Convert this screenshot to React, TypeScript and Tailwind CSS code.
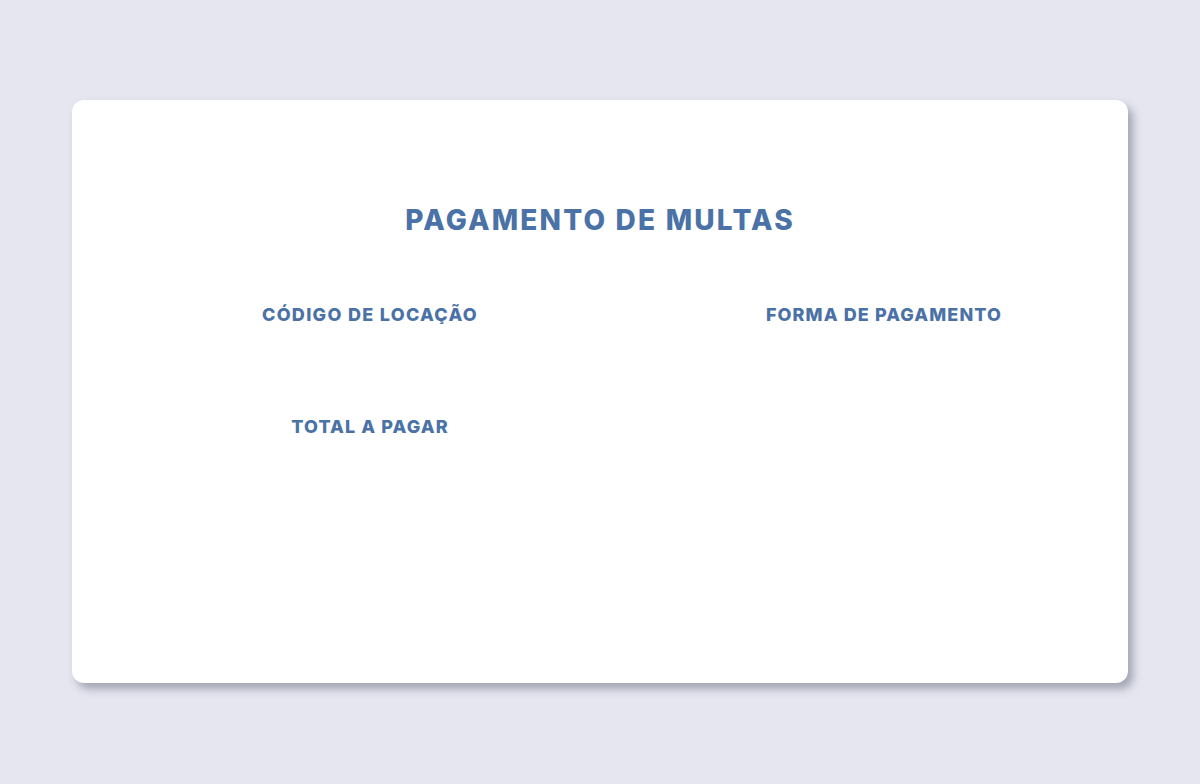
export default function App() {
  return (
    <div className="min-h-screen w-full bg-[#e5e6f0] flex items-start justify-center pt-[100px]" style={{ fontFamily: 'Inter, "Open Sans", sans-serif' }}>
      <div className="w-[1056px] h-[583px] bg-white rounded-[12px] shadow-[5px_6px_8px_rgba(110,112,130,0.55)] text-[#4a72a6]">
        <h1 className="text-center font-extrabold text-[28px] leading-none pt-[106px] tracking-[2.2px]">PAGAMENTO DE MULTAS</h1>
        <div className="grid grid-cols-[500px_1fr] gap-x-[20px] pl-[48px] mt-[72px]">
          <div className="flex flex-col items-center">
            <h2 className="font-extrabold text-[18px] leading-none tracking-[1.3px]">CÓDIGO DE LOCAÇÃO</h2>
            <h2 className="font-extrabold text-[18px] leading-none tracking-[1.1px] mt-[94px]">TOTAL A PAGAR</h2>
          </div>
          <div className="flex flex-col items-center">
            <h2 className="font-extrabold text-[18px] leading-none tracking-[1.1px]">FORMA DE PAGAMENTO</h2>
          </div>
        </div>
      </div>
    </div>
  );
}
